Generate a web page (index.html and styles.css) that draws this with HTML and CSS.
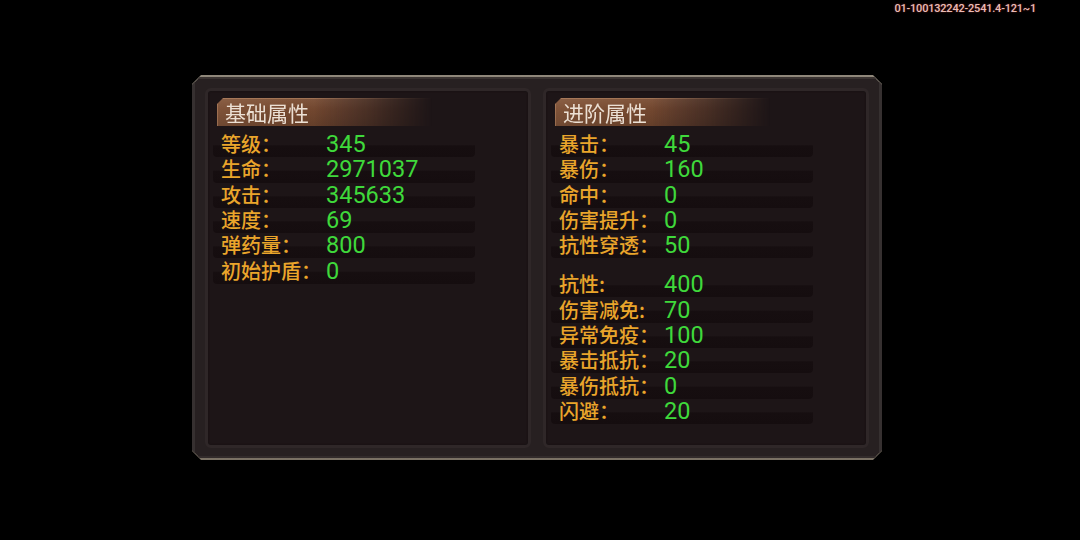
FILE: index.html
```html
<!DOCTYPE html>
<html lang="zh-CN">
<head>
<meta charset="utf-8">
<title>属性</title>
<link rel="stylesheet" href="styles.css">
</head>
<body>
<div class="screen">
  <div class="topbar"><span class="build-tag">01-100132242-2541.4-121~1</span></div>
  <div class="frame">
    <div class="frame-inner">
      <section class="panel">
        <div class="banner"><span class="banner-text">基础属性</span></div>
        <div class="rows">
          <div class="row"><span class="label">等级：</span><span class="value">345</span></div>
          <div class="row"><span class="label">生命：</span><span class="value">2971037</span></div>
          <div class="row"><span class="label">攻击：</span><span class="value">345633</span></div>
          <div class="row"><span class="label">速度：</span><span class="value">69</span></div>
          <div class="row"><span class="label">弹药量：</span><span class="value">800</span></div>
          <div class="row"><span class="label">初始护盾：</span><span class="value">0</span></div>
        </div>
      </section>
      <section class="panel">
        <div class="banner"><span class="banner-text">进阶属性</span></div>
        <div class="rows">
          <div class="row"><span class="label">暴击：</span><span class="value">45</span></div>
          <div class="row"><span class="label">暴伤：</span><span class="value">160</span></div>
          <div class="row"><span class="label">命中：</span><span class="value">0</span></div>
          <div class="row"><span class="label">伤害提升：</span><span class="value">0</span></div>
          <div class="row"><span class="label">抗性穿透：</span><span class="value">50</span></div>
        </div>
        <div class="rows rows-second">
          <div class="row"><span class="label">抗性:</span><span class="value">400</span></div>
          <div class="row"><span class="label">伤害减免:</span><span class="value">70</span></div>
          <div class="row"><span class="label">异常免疫：</span><span class="value">100</span></div>
          <div class="row"><span class="label">暴击抵抗：</span><span class="value">20</span></div>
          <div class="row"><span class="label">暴伤抵抗：</span><span class="value">0</span></div>
          <div class="row"><span class="label">闪避：</span><span class="value">20</span></div>
        </div>
      </section>
    </div>
  </div>
</div>
</body>
</html>
```

FILE: styles.css
```css
html, body {
  margin: 0;
  padding: 0;
  background: #000;
}

.screen {
  width: 1080px;
  height: 540px;
  background: #000;
  overflow: hidden;
}

.topbar {
  height: 18px;
  display: flex;
  justify-content: flex-end;
  align-items: flex-start;
  padding-right: 44px;
}

.build-tag {
  margin-top: 2px;
  font-family: Roboto, "Liberation Sans", sans-serif;
  font-size: 11px;
  font-weight: 500;
  line-height: 13px;
  letter-spacing: -0.2px;
  color: #e9bdb6;
  text-shadow: 0 0 2px rgba(200, 60, 60, 0.6);
}

.frame {
  width: 690px;
  height: 385px;
  margin: 57px 0 0 192px;
  box-sizing: border-box;
  padding: 2px 0;
  background: linear-gradient(180deg, #8f877a 0%, #7a7164 100%);
  clip-path: polygon(9px 0, calc(100% - 9px) 0, 100% 9px, 100% calc(100% - 9px), calc(100% - 9px) 100%, 9px 100%, 0 calc(100% - 9px), 0 9px);
}

.frame-inner {
  height: 100%;
  box-sizing: border-box;
  padding: 11px 13px 10px;
  display: flex;
  gap: 12px;
  background: #272021;
  box-shadow: inset 3px 0 0 #363030, inset -3px 0 0 #363030, inset 0 2px 0 #3a3331, inset 0 -2px 0 #322b2b;
  clip-path: polygon(8px 0, calc(100% - 8px) 0, 100% 8px, 100% calc(100% - 8px), calc(100% - 8px) 100%, 8px 100%, 0 calc(100% - 8px), 0 8px);
}

.panel {
  width: 326px;
  height: 360px;
  box-sizing: border-box;
  padding: 7px 0 0 5px;
  background: #1d1517;
  border: 3px solid #2f2728;
  border-radius: 6px;
  box-shadow: inset 0 0 2px #150f10;
}

.banner {
  width: 215px;
  height: 28px;
  margin-left: 4px;
  display: flex;
  align-items: center;
  padding-left: 8px;
  box-sizing: border-box;
  background:
    linear-gradient(180deg, rgba(255, 220, 190, 0.10) 0%, rgba(0, 0, 0, 0) 40%, rgba(0, 0, 0, 0.12) 100%),
    linear-gradient(90deg, #7f5339 0%, #76492f 35%, #6c4430 60%, #5e3c2b 100%);
  clip-path: polygon(6px 0, 100% 0, 100% 100%, 0 100%, 0 6px);
  box-shadow: inset 1px 1px 0 rgba(220, 170, 130, 0.35);
  -webkit-mask-image: linear-gradient(90deg, #000 0%, #000 45%, rgba(0, 0, 0, 0.6) 70%, rgba(0, 0, 0, 0) 100%);
  mask-image: linear-gradient(90deg, #000 0%, #000 45%, rgba(0, 0, 0, 0.6) 70%, rgba(0, 0, 0, 0) 100%);
}

.banner-text {
  font-family: "Noto Sans CJK SC", "Noto Sans", sans-serif;
  font-size: 21px;
  line-height: 28px;
  color: #ece0d4;
}

.rows {
  margin-top: 6px;
  display: flex;
  flex-direction: column;
}

.rows-second {
  margin-top: 13.7px;
}

.row {
  width: 262px;
  height: 25.3px;
  display: flex;
  align-items: center;
  padding-left: 8px;
  box-sizing: border-box;
  background: linear-gradient(180deg, rgba(0, 0, 0, 0) 50%, #160e10 56%, #150d0f 100%);
  border-radius: 0 0 4px 4px;
}

.label {
  width: 105px;
  flex: none;
  font-family: "Noto Sans CJK SC", "Noto Sans", sans-serif;
  font-size: 20px;
  font-weight: 500;
  line-height: 25px;
  color: #eaa52b;
  margin-top: -2px;
  white-space: nowrap;
}

.value {
  font-family: Roboto, "Liberation Sans", sans-serif;
  font-size: 23.5px;
  line-height: 25px;
  color: #3fd93b;
}
```
